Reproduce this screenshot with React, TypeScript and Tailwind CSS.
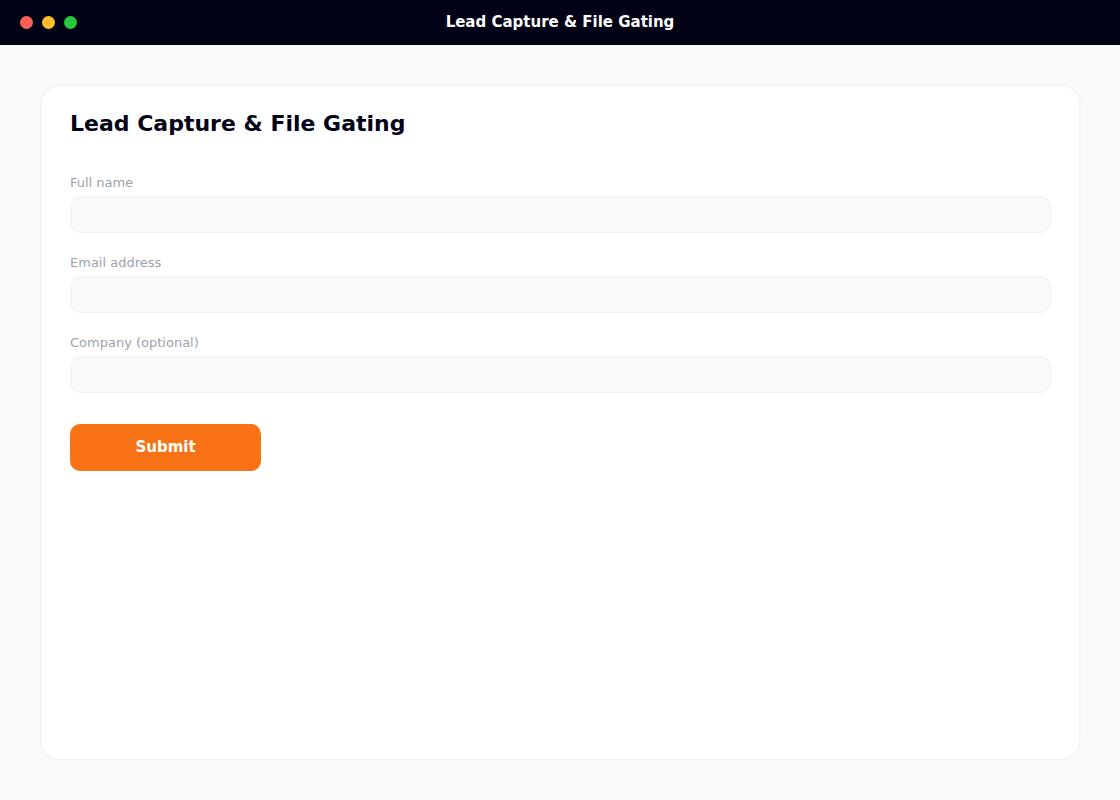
const fields = [
  { id: "name", label: "Full name", type: "text" },
  { id: "email", label: "Email address", type: "email" },
  { id: "company", label: "Company (optional)", type: "text" },
];

export default function App() {
  return (
    <div className="flex min-h-screen flex-col bg-[#f9fafc] font-['DejaVu_Sans',sans-serif] text-[#020216]">
      <TitleBar title="Lead Capture & File Gating" />
      <main className="flex flex-1 flex-col p-[39px] pl-10">
        <section className="flex-1 rounded-[20px] border-2 border-[#f3f4f6] bg-white px-7 pt-6">
          <h1 className="text-[22px] leading-7 font-bold">Lead Capture & File Gating</h1>
          <form className="mt-[35px]" onSubmit={(e) => e.preventDefault()}>
            <div className="space-y-5">
              {fields.map((f) => (
                <Field key={f.id} {...f} />
              ))}
            </div>
            <button
              type="submit"
              className="mt-[31px] h-[47px] w-[191px] rounded-[10px] bg-[#f97316] text-[15px] font-bold text-white"
            >
              Submit
            </button>
          </form>
        </section>
      </main>
    </div>
  );
}

function TitleBar({ title }: { title: string }) {
  return (
    <header className="grid h-[45px] grid-cols-[1fr_auto_1fr] items-center bg-[#020216] px-5">
      <div className="flex gap-[9px]">
        <span className="size-[13px] rounded-full bg-[#ff5f57]" />
        <span className="size-[13px] rounded-full bg-[#ffbd2e]" />
        <span className="size-[13px] rounded-full bg-[#28c940]" />
      </div>
      <div className="pb-0.5 text-[15px] leading-5 font-bold text-white">{title}</div>
    </header>
  );
}

function Field({ id, label, type }: { id: string; label: string; type: string }) {
  return (
    <div>
      <label htmlFor={id} className="mb-[3px] block text-[13px] leading-5 text-[#9ca3af]">
        {label}
      </label>
      <input
        id={id}
        name={id}
        type={type}
        className="block h-[37px] w-full rounded-[10px] border-2 border-[#f3f4f6] bg-[#f9fafc] px-3 text-sm"
      />
    </div>
  );
}
